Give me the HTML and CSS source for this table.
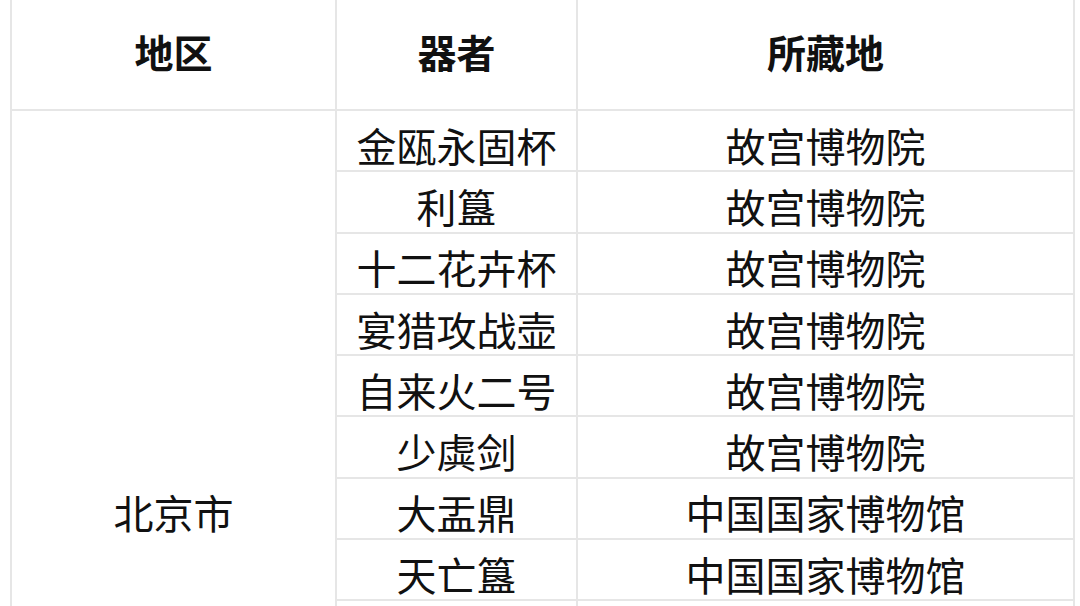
FILE: index.html
```html
<!DOCTYPE html>
<html lang="zh-CN">
<head>
<meta charset="utf-8">
<title>器者所藏地</title>
<link rel="stylesheet" href="styles.css">
</head>
<body>
<div class="sheet">
  <div class="cell head">地区</div>
  <div class="cell head">器者</div>
  <div class="cell head">所藏地</div>

  <div class="cell region">北京市</div>

  <div class="cell">金瓯永固杯</div><div class="cell">故宫博物院</div>
  <div class="cell">利簋</div><div class="cell">故宫博物院</div>
  <div class="cell">十二花卉杯</div><div class="cell">故宫博物院</div>
  <div class="cell">宴猎攻战壶</div><div class="cell">故宫博物院</div>
  <div class="cell">自来火二号</div><div class="cell">故宫博物院</div>
  <div class="cell">少虡剑</div><div class="cell">故宫博物院</div>
  <div class="cell">大盂鼎</div><div class="cell">中国国家博物馆</div>
  <div class="cell">天亡簋</div><div class="cell">中国国家博物馆</div>
  <div class="cell"></div><div class="cell"></div>
</div>
</body>
</html>
```
FILE: styles.css
```css
html, body {
  margin: 0;
  padding: 0;
  background: #ffffff;
  overflow: hidden;
}

body {
  font-family: "Noto Sans CJK SC", "Noto Sans", sans-serif;
  color: #111111;
}

.sheet {
  display: grid;
  grid-template-columns: 325px 241px 497px;
  grid-template-rows: 117px repeat(13, 61.3px);
  margin: -6px 0 0 10px;
  border-left: 2px solid #e6e6e6;
  width: max-content;
}

.cell {
  box-sizing: border-box;
  display: flex;
  align-items: center;
  justify-content: center;
  padding-top: 8px;
  border-right: 2px solid #e6e6e6;
  border-bottom: 2px solid #e6e6e6;
  font-size: 40px;
  line-height: 1;
  white-space: nowrap;
}

.head {
  padding-top: 0;
  font-weight: 700;
  font-size: 39px;
}

.region {
  grid-row: span 13;
}
```
